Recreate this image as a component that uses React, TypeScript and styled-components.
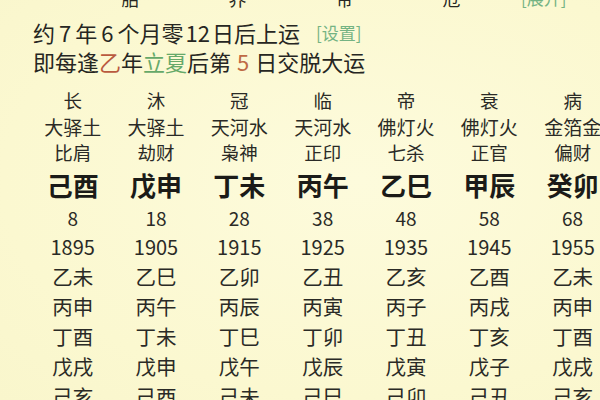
import React from "react";
import styled, { createGlobalStyle } from "styled-components";

const Global = createGlobalStyle`
  html, body { margin: 0; padding: 0; }
  body {
    background: #fbf9d3;
    font-family: "Noto Sans CJK SC", "Noto Sans", sans-serif;
    color: #262622;
  }
`;

const Page = styled.div`
  width: 600px;
  height: 400px;
  overflow: hidden;
  background: radial-gradient(ellipse at 60% 45%, #fdfbdc 0%, #fbf8d0 70%, #f9f6cc 100%);
`;

const TopRow = styled.div`
  display: flex;
  align-items: center;
  margin-top: -14px;
  height: 24px;
  padding-left: 77px;
  font-size: 18px;
  line-height: 24px;
`;

const TopCell = styled.span`
  width: 107px;
  text-align: center;
`;

const Link = styled.span<{ $gap: number; $size: number }>`
  color: #74b383;
  font-size: ${(p) => p.$size}px;
  margin-left: ${(p) => p.$gap}px;
`;

const InfoLine = styled.div<{ $first?: boolean }>`
  display: flex;
  align-items: center;
  padding-left: 33px;
  margin-top: ${(p) => (p.$first ? 8 : 0)}px;
  height: 29px;
  font-size: 22px;
  line-height: 29px;
  white-space: nowrap;
`;

const Num = styled.span<{ $pad: number; $c?: string }>`
  margin: 0 ${(p) => p.$pad}px;
  color: ${(p) => p.$c ?? "inherit"};
`;

const Mark = styled.span<{ $c: string }>`
  color: ${(p) => p.$c};
`;

const Table = styled.div`
  display: flex;
  margin-top: 10px;
  padding-left: 31px;
`;

const Pillar = styled.div`
  flex: 0 0 83.33px;
  display: flex;
  flex-direction: column;
  align-items: center;
  white-space: nowrap;
`;

type Kind = "stage" | "nayin" | "god" | "pillar" | "age" | "year" | "flow";

const sizes: Record<Kind, { h: number; fs: number; w: number }> = {
  stage: { h: 28, fs: 18.5, w: 400 },
  nayin: { h: 25, fs: 19, w: 400 },
  god: { h: 27, fs: 18.5, w: 400 },
  pillar: { h: 37, fs: 26, w: 700 },
  age: { h: 30, fs: 19, w: 400 },
  year: { h: 28, fs: 20, w: 400 },
  flow: { h: 30, fs: 20.5, w: 400 },
};

const Cell = styled.div<{ $kind: Kind }>`
  height: ${(p) => sizes[p.$kind].h}px;
  line-height: ${(p) => sizes[p.$kind].h}px;
  font-size: ${(p) => sizes[p.$kind].fs}px;
  font-weight: ${(p) => sizes[p.$kind].w};
  color: ${(p) => (p.$kind === "pillar" ? "#1b1b18" : "#2a2a26")};
`;

type P = {
  stage: string;
  nayin: string;
  god: string;
  pillar: string;
  age: string;
  year: string;
  flow: string[];
};

const data: P[] = [
  { stage: "长", nayin: "大驿土", god: "比肩", pillar: "己酉", age: "8", year: "1895", flow: ["乙未", "丙申", "丁酉", "戊戌", "己亥"] },
  { stage: "沐", nayin: "大驿土", god: "劫财", pillar: "戊申", age: "18", year: "1905", flow: ["乙巳", "丙午", "丁未", "戊申", "己酉"] },
  { stage: "冠", nayin: "天河水", god: "枭神", pillar: "丁未", age: "28", year: "1915", flow: ["乙卯", "丙辰", "丁巳", "戊午", "己未"] },
  { stage: "临", nayin: "天河水", god: "正印", pillar: "丙午", age: "38", year: "1925", flow: ["乙丑", "丙寅", "丁卯", "戊辰", "己巳"] },
  { stage: "帝", nayin: "佛灯火", god: "七杀", pillar: "乙巳", age: "48", year: "1935", flow: ["乙亥", "丙子", "丁丑", "戊寅", "己卯"] },
  { stage: "衰", nayin: "佛灯火", god: "正官", pillar: "甲辰", age: "58", year: "1945", flow: ["乙酉", "丙戌", "丁亥", "戊子", "己丑"] },
  { stage: "病", nayin: "金箔金", god: "偏财", pillar: "癸卯", age: "68", year: "1955", flow: ["乙未", "丙申", "丁酉", "戊戌", "己亥"] },
];

export default function App() {
  return (
    <Page>
      <Global />
      <TopRow>
        <TopCell>胎</TopCell>
        <TopCell>养</TopCell>
        <TopCell>帝</TopCell>
        <TopCell>危</TopCell>
        <Link $gap={16} $size={17}>[展开]</Link>
      </TopRow>
      <InfoLine $first>
        约<Num $pad={4}>7</Num>年<Num $pad={4}>6</Num>个月零<Num $pad={2}>12</Num>日后上运
        <Link $gap={16} $size={17}>[设置]</Link>
      </InfoLine>
      <InfoLine>
        即每逢<Mark $c="#b95a3f">乙</Mark>年<Mark $c="#66a969">立夏</Mark>后第
        <Num $pad={6} $c="#bf6a45">5</Num>日交脱大运
      </InfoLine>
      <Table>
        {data.map((p) => (
          <Pillar key={p.age}>
            <Cell $kind="stage">{p.stage}</Cell>
            <Cell $kind="nayin">{p.nayin}</Cell>
            <Cell $kind="god">{p.god}</Cell>
            <Cell $kind="pillar">{p.pillar}</Cell>
            <Cell $kind="age">{p.age}</Cell>
            <Cell $kind="year">{p.year}</Cell>
            {p.flow.map((f, i) => (
              <Cell key={i} $kind="flow">
                {f}
              </Cell>
            ))}
          </Pillar>
        ))}
      </Table>
    </Page>
  );
}
